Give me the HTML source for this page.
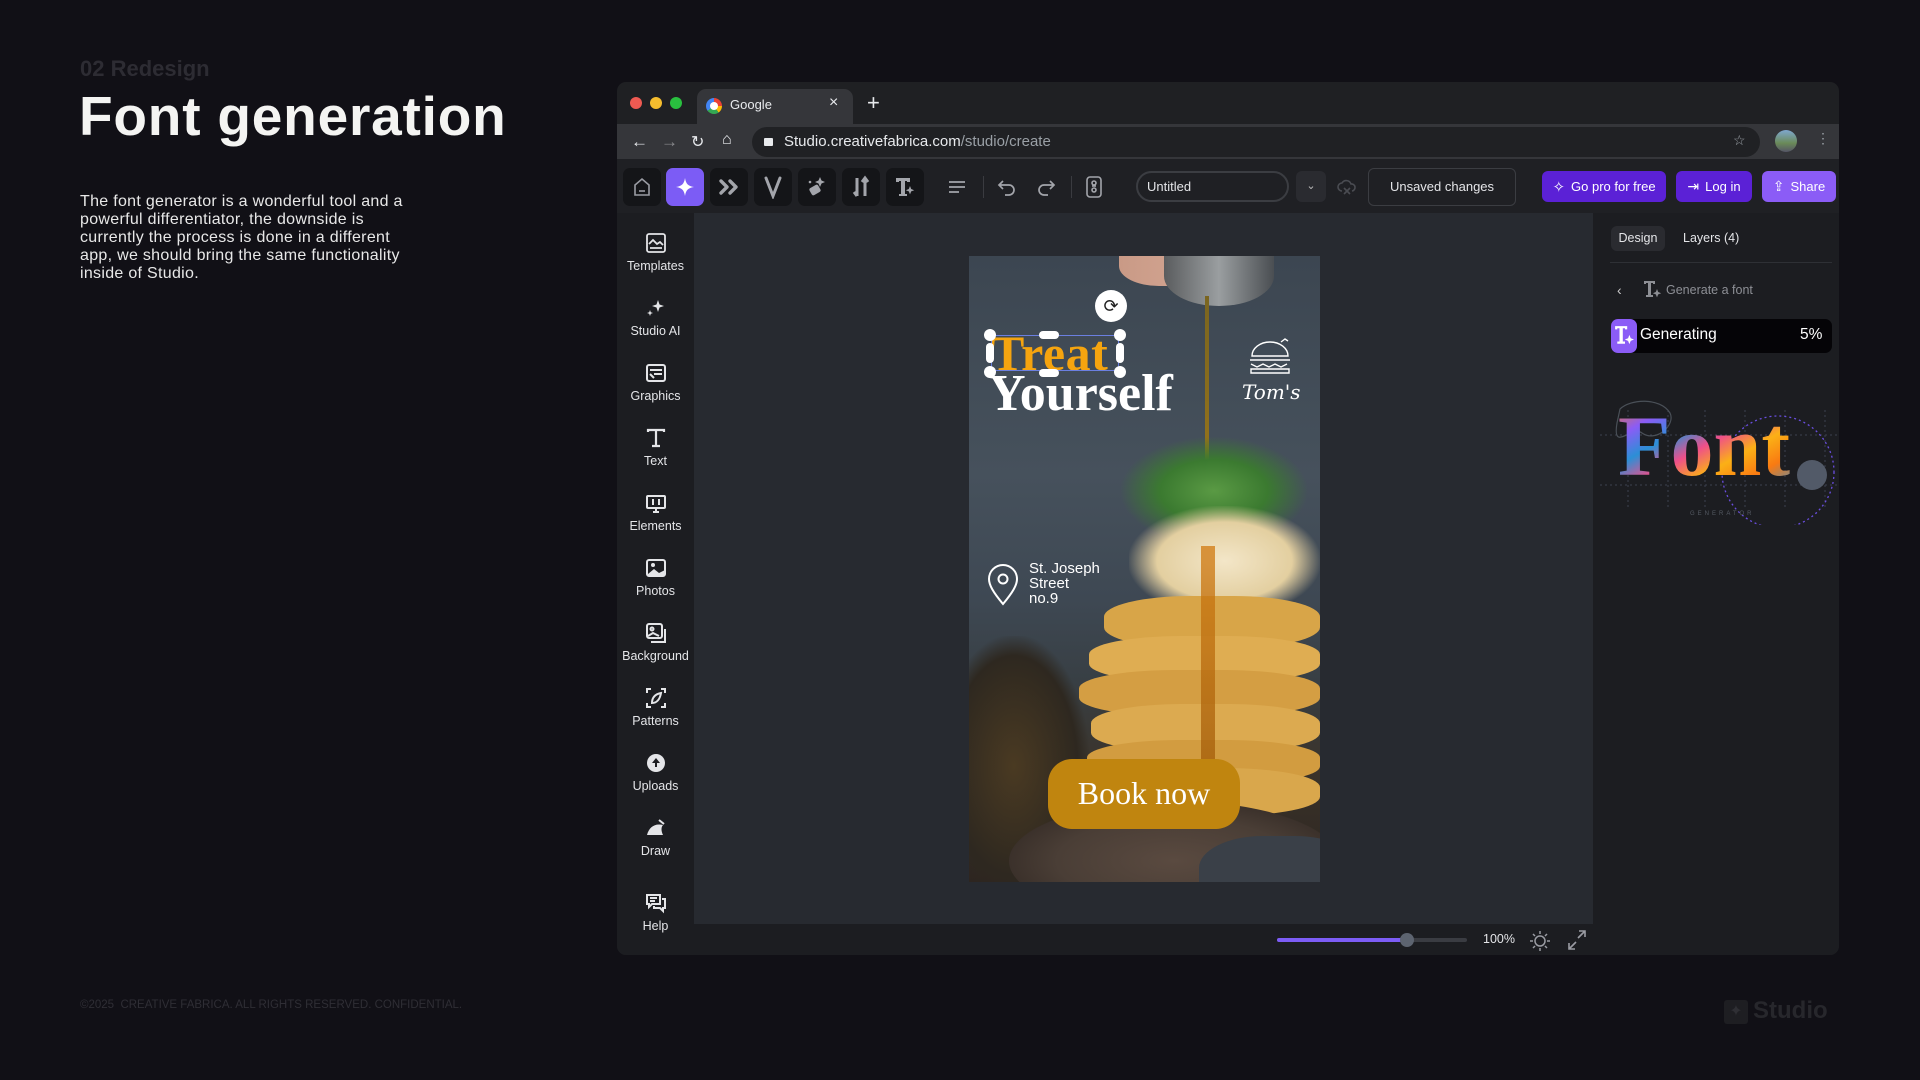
<!DOCTYPE html>
<html><head><meta charset="utf-8"><style>
*{margin:0;padding:0;box-sizing:border-box}
body{width:1920px;height:1080px;background:#111016;font-family:"Liberation Sans",sans-serif;position:relative;overflow:hidden;color:#fff}
.a{position:absolute}
.tb{position:absolute;top:168px;width:38px;height:38px;border-radius:7px;background:#141518;display:flex;align-items:center;justify-content:center}
.side{position:absolute;left:617px;width:77px;text-align:center;font-size:12.5px;color:#e4e5e8}
.side svg{display:block;margin:0 auto 5px}
.btn{position:absolute;top:171px;height:31px;border-radius:6px;display:flex;align-items:center;justify-content:center;font-size:13px;color:#fff;gap:6px}
</style></head><body>

<div class="a" style="left:80px;top:56px;font-size:22px;font-weight:bold;color:#2d2c33">02 Redesign</div>
<div class="a" style="left:79px;top:84px;font-size:55px;font-weight:bold;color:#f4f4f2;letter-spacing:0.8px">Font generation</div>
<div class="a" style="left:80px;top:193px;width:470px;font-size:16px;line-height:18px;color:#e8e8e8;letter-spacing:0.3px">The font generator is a wonderful tool and a<br>powerful differentiator, the downside is<br>currently the process is done in a different<br>app, we should bring the same functionality<br>inside of Studio.</div>
<div class="a" style="left:80px;top:999px;font-size:11.5px;color:#2f2e35">©2025 &nbsp;CREATIVE FABRICA. ALL RIGHTS RESERVED. CONFIDENTIAL.</div>
<div class="a" style="left:1724px;top:1000px;width:24px;height:24px;background:#1e1e22;border-radius:3px;color:#2f2f34;font-size:16px;text-align:center;line-height:24px">✦</div>
<div class="a" style="left:1753px;top:997px;font-size:24px;font-weight:bold;color:#27272c">Studio</div>

<!-- browser -->
<div class="a" style="left:617px;top:82px;width:1222px;height:873px;background:#1f2023;border-radius:9px;overflow:hidden">
  <div class="a" style="left:13px;top:15px;width:12px;height:12px;border-radius:50%;background:#ee5a52"></div>
  <div class="a" style="left:33px;top:15px;width:12px;height:12px;border-radius:50%;background:#f5bd2e"></div>
  <div class="a" style="left:53px;top:15px;width:12px;height:12px;border-radius:50%;background:#29c03f"></div>
  <div class="a" style="left:80px;top:7px;width:156px;height:36px;background:#35363a;border-radius:9px 9px 0 0"></div>
  <div class="a" style="left:89px;top:16px;width:16px;height:16px;border-radius:50%;background:conic-gradient(#ea4335 0 25%,#fbbc05 0 40%,#34a853 0 65%,#4285f4 0 100%)"><div style="margin:4px;width:8px;height:8px;border-radius:50%;background:#fff"></div></div>
  <div class="a" style="left:113px;top:15px;font-size:13px;color:#e8eaed">Google</div>
  <div class="a" style="left:212px;top:12px;font-size:16px;color:#e8eaed">×</div>
  <div class="a" style="left:250px;top:8px;font-size:22px;color:#e8eaed">+</div>
  <div class="a" style="left:0;top:42px;width:1222px;height:35px;background:#35363a"></div>
  <div class="a" style="left:14px;top:50px;font-size:17px;color:#e8eaed">←</div>
  <div class="a" style="left:44px;top:50px;font-size:17px;color:#8a8b8e">→</div>
  <div class="a" style="left:74px;top:50px;font-size:16px;color:#e8eaed">↻</div>
  <div class="a" style="left:105px;top:49px;font-size:16px;color:#e8eaed">⌂</div>
  <div class="a" style="left:135px;top:45px;width:1008px;height:30px;border-radius:15px;background:#202124"></div>
  <div class="a" style="left:147px;top:56px;width:9px;height:8px;background:#e8eaed;border-radius:1px"></div>
  <div class="a" style="left:167px;top:51px;font-size:15px;color:#e8eaed">Studio.creativefabrica.com<span style="color:#9aa0a6">/studio/create</span></div>
  <div class="a" style="left:1116px;top:50px;font-size:14px;color:#9aa0a6">☆</div>
  <div class="a" style="left:1158px;top:48px;width:22px;height:22px;border-radius:50%;background:linear-gradient(#7fa8d0,#6a8a58 60%,#556)"></div>
  <div class="a" style="left:1199px;top:48px;font-size:14px;color:#9aa0a6">⋮</div>
  <div class="a" style="left:0;top:77px;width:1222px;height:54px;background:#1f2024"></div>
</div>

<!-- toolbar -->
<div class="tb" style="left:623px"><svg width="22" height="22" viewBox="0 0 22 22" fill="none" stroke="#9a9ca3" stroke-width="1.6"><path d="M4 9L11 3l7 6v10H4z"/><path d="M8 15h6"/></svg></div>
<div class="tb" style="left:666px;background:#7c5cf5"><svg width="22" height="22" viewBox="0 0 22 22"><path d="M11 2C12 8 14 10 20 11 14 12 12 14 11 20 10 14 8 12 2 11 8 10 10 8 11 2z" fill="#fff"/></svg></div>
<div class="tb" style="left:710px"><svg width="24" height="22" viewBox="0 0 24 22" fill="none" stroke="#a3a5ab" stroke-width="3.4" stroke-linecap="round" stroke-linejoin="round"><path d="M4 5l6 6-6 6M13 5l6 6-6 6"/></svg></div>
<div class="tb" style="left:754px"><svg width="22" height="24" viewBox="0 0 22 24" fill="none" stroke="#a3a5ab" stroke-width="3" stroke-linecap="round"><path d="M4 3l7 18 7-18"/></svg></div>
<div class="tb" style="left:798px"><svg width="24" height="24" viewBox="0 0 24 24" fill="#a3a5ab"><path d="M15 2l1.5 3.5L20 7l-3.5 1.5L15 12l-1.5-3.5L10 7l3.5-1.5z"/><rect x="5" y="11" width="10" height="8" rx="2" transform="rotate(-30 10 15)"/><circle cx="5" cy="7" r="1.3"/></svg></div>
<div class="tb" style="left:842px"><svg width="22" height="24" viewBox="0 0 22 24" fill="none" stroke="#a3a5ab" stroke-width="3"><path d="M7 3v18M15 21V4M12 7l3-4 3 4M4 17l3 4"/></svg></div>
<div class="tb" style="left:886px"><svg width="24" height="24" viewBox="0 0 24 24" fill="#a3a5ab"><path d="M3 3h14v4h-3V6h-2v13h2v2H6v-2h2V6H6v1H3z"/><path d="M17 11l1.2 3 3 1.2-3 1.2-1.2 3-1.2-3-3-1.2 3-1.2z"/></svg></div>
<svg class="a" style="left:948px;top:179px" width="18" height="16" viewBox="0 0 18 16" stroke="#a3a5ab" stroke-width="1.8"><path d="M1 3h16M1 8h16M1 13h10"/></svg>
<div class="a" style="left:983px;top:176px;width:1px;height:22px;background:#3a3b40"></div>
<svg class="a" style="left:997px;top:178px" width="20" height="18" viewBox="0 0 20 18" fill="none" stroke="#a3a5ab" stroke-width="1.7"><path d="M6 3L2 7l4 4M2 7h10a5 5 0 010 10H8"/></svg>
<svg class="a" style="left:1036px;top:178px" width="20" height="18" viewBox="0 0 20 18" fill="none" stroke="#a3a5ab" stroke-width="1.7"><path d="M14 3l4 4-4 4M18 7H8a5 5 0 000 10h4"/></svg>
<div class="a" style="left:1071px;top:176px;width:1px;height:22px;background:#3a3b40"></div>
<svg class="a" style="left:1086px;top:176px" width="16" height="22" viewBox="0 0 16 22" fill="none" stroke="#a3a5ab" stroke-width="1.6"><rect x="1" y="1" width="14" height="20" rx="3"/><circle cx="8" cy="7" r="2"/><circle cx="8" cy="14" r="2"/><path d="M6 10h4"/></svg>
<div class="a" style="left:1136px;top:171px;width:153px;height:31px;border:2px solid #3b3d42;border-radius:16px;font-size:13px;color:#e4e5e8;padding:6px 0 0 9px">Untitled</div>
<div class="a" style="left:1296px;top:171px;width:30px;height:31px;background:#2a2b30;border-radius:6px;color:#bbb;font-size:11px;text-align:center;line-height:31px">⌄</div>
<svg class="a" style="left:1337px;top:177px" width="20" height="20" viewBox="0 0 20 20" fill="none" stroke="#4a4c52" stroke-width="1.6"><path d="M5 14a4 4 0 010-8 5 5 0 019 1 3.5 3.5 0 011 7"/><path d="M7 11l6 6M13 11l-6 6"/></svg>
<div class="a" style="left:1368px;top:168px;width:148px;height:38px;border:1px solid #3b3d42;border-radius:6px;font-size:13px;color:#e4e5e8;text-align:center;line-height:36px">Unsaved changes</div>
<div class="btn" style="left:1542px;width:124px;background:#5b21d6"><span style="font-size:15px">✧</span>Go pro for free</div>
<div class="btn" style="left:1676px;width:76px;background:#5b21d6"><span style="font-size:14px">⇥</span>Log in</div>
<div class="btn" style="left:1762px;width:74px;background:#8b5cf6"><span style="font-size:14px">⇪</span>Share</div>

<!-- sidebar -->
<div class="a" style="left:617px;top:213px;width:77px;height:742px;background:#1c1d21;border-radius:0 0 0 9px"></div>
<div class="side" style="top:232px"><svg width="22" height="22" viewBox="0 0 22 22" fill="none" stroke="#e4e5e8" stroke-width="1.8"><rect x="2" y="2" width="18" height="18" rx="2"/><path d="M4 12l4-4 4 4 3-2 3 3M5 16h12"/></svg>Templates</div>
<div class="side" style="top:297px"><svg width="22" height="22" viewBox="0 0 22 22" fill="#e4e5e8"><path d="M13 3l1.5 4.5L19 9l-4.5 1.5L13 15l-1.5-4.5L7 9l4.5-1.5z"/><path d="M5 13l.8 2.2L8 16l-2.2.8L5 19l-.8-2.2L2 16l2.2-.8z"/></svg>Studio AI</div>
<div class="side" style="top:362px"><svg width="22" height="22" viewBox="0 0 22 22" fill="none" stroke="#e4e5e8" stroke-width="2"><rect x="2" y="3" width="18" height="16" rx="2"/><path d="M5 8h12M5 12l4 4M9 12h8"/></svg>Graphics</div>
<div class="side" style="top:427px"><svg width="22" height="22" viewBox="0 0 22 22" fill="none" stroke="#e4e5e8" stroke-width="2.2"><path d="M3 5V3h16v2M11 3v16M7 19h8"/></svg>Text</div>
<div class="side" style="top:492px"><svg width="22" height="22" viewBox="0 0 22 22" fill="none" stroke="#e4e5e8" stroke-width="2"><rect x="2" y="4" width="18" height="12" rx="1"/><path d="M8 20h6M11 16v4M8 7v6M14 7v6"/></svg>Elements</div>
<div class="side" style="top:557px"><svg width="22" height="22" viewBox="0 0 22 22"><rect x="2" y="3" width="18" height="16" rx="2" fill="none" stroke="#e4e5e8" stroke-width="2"/><circle cx="8" cy="8" r="2" fill="#e4e5e8"/><path d="M3 17l6-5 5 4 6-3v5H3z" fill="#e4e5e8"/></svg>Photos</div>
<div class="side" style="top:622px"><svg width="22" height="22" viewBox="0 0 22 22" fill="none" stroke="#e4e5e8" stroke-width="2"><rect x="2" y="2" width="15" height="14" rx="2"/><path d="M6 20h14V7"/><circle cx="7" cy="7" r="1.5"/><path d="M3 14l5-3 6 3"/></svg>Background</div>
<div class="side" style="top:687px"><svg width="22" height="22" viewBox="0 0 22 22" fill="none" stroke="#e4e5e8" stroke-width="2"><path d="M2 6V2h4M16 2h4v4M20 16v4h-4M6 20H2v-4"/><path d="M7 16c0-6 4-9 9-10-1 6-4 10-9 10z"/></svg>Patterns</div>
<div class="side" style="top:752px"><svg width="22" height="22" viewBox="0 0 22 22"><circle cx="11" cy="11" r="9" fill="#e4e5e8"/><path d="M11 6l-4 5h3v4h2v-4h3z" fill="#1c1d21"/></svg>Uploads</div>
<div class="side" style="top:817px"><svg width="22" height="22" viewBox="0 0 22 22" fill="#e4e5e8"><path d="M2 18c2-8 8-12 16-10-2 2-2 6 0 10z"/><path d="M14 3l5 4" stroke="#e4e5e8" stroke-width="2"/></svg>Draw</div>
<div class="side" style="top:892px"><svg width="22" height="22" viewBox="0 0 22 22" fill="none" stroke="#e4e5e8" stroke-width="2"><path d="M2 3h13v9H7l-3 3v-3H2z"/><path d="M17 7h3v9h-2v3l-3-3H9v-2"/><path d="M5 6h7M5 9h5"/></svg>Help</div>

<!-- canvas -->
<div class="a" style="left:694px;top:213px;width:899px;height:711px;background:#272a30"></div>
<div class="a" style="left:694px;top:924px;width:899px;height:31px;background:#1c1d21"></div>
<div class="a" style="left:1277px;top:938px;width:190px;height:4px;border-radius:2px;background:#3a3c42"></div>
<div class="a" style="left:1277px;top:938px;width:130px;height:4px;border-radius:2px;background:#7c5cf5"></div>
<div class="a" style="left:1400px;top:933px;width:14px;height:14px;border-radius:50%;background:#5d6470"></div>
<div class="a" style="left:1483px;top:932px;font-size:12.5px;color:#e4e5e8">100%</div>
<svg class="a" style="left:1529px;top:930px" width="22" height="22" viewBox="0 0 22 22" fill="none" stroke="#9a9ca3" stroke-width="1.5"><circle cx="11" cy="11" r="5"/><path d="M11 1v3M11 18v3M1 11h3M18 11h3M4 4l2 2M16 16l2 2M4 18l2-2M16 6l2-2"/></svg>
<svg class="a" style="left:1566px;top:928px" width="22" height="24" viewBox="0 0 22 24" fill="none" stroke="#9a9ca3" stroke-width="1.6"><path d="M3 21l7-7M3 15v6h6M19 3l-7 7M13 3h6v6"/></svg>

<!-- design -->
<div class="a" style="left:969px;top:256px;width:351px;height:626px;overflow:hidden;background:linear-gradient(180deg,#3c4651 0%,#46515c 35%,#3e4853 55%,#383f44 68%,#3a332a 82%,#2d2520 100%)">
  <div class="a" style="left:-30px;top:380px;width:150px;height:260px;border-radius:45%;background:radial-gradient(ellipse,#4a3a22 0%,#2e2820 60%,transparent 72%)"></div>
  <div class="a" style="left:150px;top:-20px;width:100px;height:50px;border-radius:0 0 40% 40%;background:linear-gradient(90deg,#c99a86,#d7a996)"></div>
  <div class="a" style="left:195px;top:-10px;width:110px;height:60px;border-radius:0 0 50% 50%;background:linear-gradient(90deg,#5a5c5e,#9a9ea0 50%,#4a4e52)"></div>
  <div class="a" style="left:236px;top:40px;width:4px;height:240px;background:linear-gradient(#7a6520,#a07818)"></div>
  <div class="a" style="left:150px;top:180px;width:190px;height:110px;border-radius:50%;background:radial-gradient(ellipse,#5a9a44 0%,#3b7a30 40%,transparent 70%)"></div>
  <div class="a" style="left:160px;top:250px;width:191px;height:110px;border-radius:40%;background:radial-gradient(ellipse,#f3e6c8 0%,#e3cfa0 50%,transparent 72%)"></div>
  <div class="a" style="left:135px;top:340px;width:216px;height:52px;border-radius:40%;background:#d8a548"></div>
  <div class="a" style="left:120px;top:380px;width:231px;height:46px;border-radius:40%;background:#dfad52"></div>
  <div class="a" style="left:110px;top:414px;width:241px;height:46px;border-radius:40%;background:#d49e43"></div>
  <div class="a" style="left:122px;top:448px;width:229px;height:48px;border-radius:40%;background:#dcaa50"></div>
  <div class="a" style="left:118px;top:484px;width:233px;height:44px;border-radius:40%;background:#d29c40"></div>
  <div class="a" style="left:112px;top:512px;width:239px;height:48px;border-radius:40%;background:#d9a74c"></div>
  <div class="a" style="left:232px;top:290px;width:14px;height:230px;background:linear-gradient(#d17a10,#a05a08);opacity:.75"></div>
  <div class="a" style="left:40px;top:545px;width:330px;height:120px;border-radius:50%;background:radial-gradient(ellipse,#5a4a40 0%,#4a3e36 50%,#3a302a 72%)"></div>
  <div class="a" style="left:230px;top:580px;width:160px;height:80px;border-radius:40%;background:#3a4048"></div>
  <div class="a" style="left:79px;top:503px;width:192px;height:70px;border-radius:24px;background:#c0850f"></div>
  <div class="a" style="left:79px;top:519px;width:192px;text-align:center;font-family:'Liberation Serif',serif;font-size:32px;color:#fff">Book now</div>
  <div class="a" style="left:22px;top:68px;font-family:'Liberation Serif',serif;font-weight:bold;font-size:50px;color:#f5a40f;letter-spacing:0.5px">Treat</div>
  <div class="a" style="left:19px;top:108px;font-family:'Liberation Serif',serif;font-weight:bold;font-size:52px;color:#fff;letter-spacing:0px">Yourself</div>
  <div class="a" style="left:22px;top:79px;width:128px;height:36px;border:1px solid #6b7fe0"></div>
  <div class="a" style="left:15px;top:73px;width:12px;height:12px;border-radius:50%;background:#fff"></div>
  <div class="a" style="left:145px;top:73px;width:12px;height:12px;border-radius:50%;background:#fff"></div>
  <div class="a" style="left:15px;top:110px;width:12px;height:12px;border-radius:50%;background:#fff"></div>
  <div class="a" style="left:145px;top:110px;width:12px;height:12px;border-radius:50%;background:#fff"></div>
  <div class="a" style="left:70px;top:75px;width:20px;height:8px;border-radius:4px;background:#fff"></div>
  <div class="a" style="left:70px;top:113px;width:20px;height:8px;border-radius:4px;background:#fff"></div>
  <div class="a" style="left:17px;top:87px;width:8px;height:20px;border-radius:4px;background:#fff"></div>
  <div class="a" style="left:147px;top:87px;width:8px;height:20px;border-radius:4px;background:#fff"></div>
  <div class="a" style="left:126px;top:34px;width:32px;height:32px;border-radius:50%;background:#fff;color:#222;font-size:18px;text-align:center;line-height:32px">⟳</div>
  <svg class="a" style="left:278px;top:82px" width="46" height="40" viewBox="0 0 46 40" fill="none" stroke="#fff" stroke-width="1.4"><path d="M5 18a18 14 0 0136 0z"/><path d="M3 22h40M4 26l6 3 6-3 6 3 6-3 6 3 6-3M4 31h38v4H4z"/><path d="M34 4l4-3 3 2"/></svg>
  <div class="a" style="left:273px;top:124px;font-family:'DejaVu Serif',serif;font-style:italic;font-size:20px;color:#fff">Tom's</div>
  <svg class="a" style="left:18px;top:308px" width="32" height="42" viewBox="0 0 32 42" fill="none" stroke="#fff" stroke-width="2"><path d="M16 40C6 28 2 21 2 15a14 14 0 0128 0c0 6-4 13-14 25z"/><circle cx="16" cy="15" r="4.5"/></svg>
  <div class="a" style="left:60px;top:305px;font-size:15px;line-height:15px;color:#fff">St. Joseph<br>Street<br>no.9</div>
</div>

<!-- right panel -->
<div class="a" style="left:1593px;top:213px;width:246px;height:742px;background:#1c1d21;border-radius:0 0 9px 0"></div>
<div class="a" style="left:1611px;top:226px;width:54px;height:25px;border-radius:6px;background:#2a2b30;font-size:12.5px;color:#e4e5e8;text-align:center;line-height:25px">Design</div>
<div class="a" style="left:1683px;top:231px;font-size:12.5px;color:#e4e5e8">Layers (4)</div>
<div class="a" style="left:1610px;top:262px;width:222px;height:1px;background:#2e3035"></div>
<div class="a" style="left:1617px;top:282px;font-size:14px;color:#ccc">‹</div>
<svg class="a" style="left:1643px;top:280px" width="20" height="20" viewBox="0 0 20 20" fill="#8d8f95"><path d="M1 1h11v3h-2V3H8v12h2v2H3v-2h2V3H3v1H1z"/><path d="M14 9l1.2 3 3 1.2-3 1.2-1.2 3-1.2-3-3-1.2 3-1.2z"/></svg>
<div class="a" style="left:1666px;top:283px;font-size:12.5px;color:#8d8f95">Generate a font</div>
<div class="a" style="left:1611px;top:319px;width:221px;height:34px;border-radius:7px;background:#050407"></div>
<div class="a" style="left:1611px;top:319px;width:26px;height:34px;border-radius:7px;background:#8b5cf6"></div>
<svg class="a" style="left:1614px;top:325px" width="22" height="22" viewBox="0 0 20 20" fill="#fff"><path d="M1 1h11v3h-2V3H8v12h2v2H3v-2h2V3H3v1H1z"/><path d="M14 9l1.2 3 3 1.2-3 1.2-1.2 3-1.2-3-3-1.2 3-1.2z"/></svg>
<div class="a" style="left:1640px;top:326px;font-size:15.5px;color:#fff">Generating</div>
<div class="a" style="left:1800px;top:326px;font-size:15.5px;color:#fff">5%</div>

<!-- font graphic -->
<svg class="a" style="left:1600px;top:395px" width="240" height="130" viewBox="0 0 240 130">
  <g stroke="#3c4150" stroke-dasharray="2 3" fill="none">
    <path d="M0 40h240M0 90h240M28 15v100M68 15v100M105 15v100M145 15v100M185 15v100M225 15v100"/>
  </g>
  <path d="M20 14c10-10 40-12 50 4 6 12-14 30-28 20-10-8-30 20-25-10z" fill="none" stroke="#4a5058" stroke-width="1.2"/>
  <circle cx="178" cy="77" r="56" fill="none" stroke="#6a4ee0" stroke-width="1.3" stroke-dasharray="2 3"/>
  <defs><linearGradient id="g" x1="0" y1="0" x2="1" y2="1"><stop offset="0" stop-color="#f97a12"/><stop offset=".2" stop-color="#8b5cf6"/><stop offset=".35" stop-color="#2b8fd6"/><stop offset=".5" stop-color="#ef4f8a"/><stop offset=".65" stop-color="#fbb016"/><stop offset=".8" stop-color="#f97a12"/><stop offset="1" stop-color="#2b8fd6"/></linearGradient></defs>
  <text x="18" y="80" font-family="Liberation Serif,serif" font-weight="bold" font-size="86" fill="url(#g)">Font</text>
  <circle cx="212" cy="80" r="15" fill="#525a68"/>
  <text x="90" y="120" font-family="Liberation Sans,sans-serif" font-size="6" letter-spacing="3" fill="#555a64">GENERATOR</text>
</svg>
</body></html>
